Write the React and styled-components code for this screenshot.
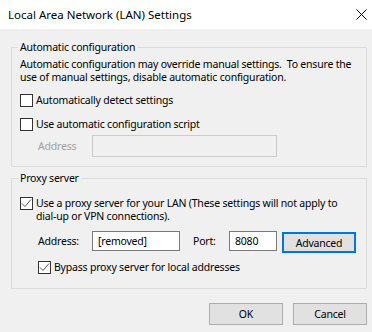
import React from 'react';
import styled, { createGlobalStyle } from 'styled-components';

const GlobalStyle = createGlobalStyle`
  html, body {
    margin: 0;
    padding: 0;
    background: #f0f0f0;
  }
  body {
    font-family: "Noto Sans", "Liberation Sans", sans-serif;
    font-size: 10.5px;
    letter-spacing: -0.2px;
    color: #000;
  }
`;

const Window = styled.div`
  width: 372px;
  height: 332px;
  display: flex;
  flex-direction: column;
  background: #f0f0f0;
  overflow: hidden;
`;

const TitleBar = styled.div`
  height: 29px;
  flex: none;
  box-sizing: border-box;
  background: #fff;
  display: flex;
  align-items: center;
  justify-content: space-between;
  padding: 0 5px 0 8px;
  font-size: 11.5px;
  letter-spacing: 0;
`;

const Body = styled.div`
  display: flex;
  flex-direction: column;
  padding: 11px 5px 0 11px;
`;

const Group = styled.fieldset`
  margin: 0 0 ${(p) => p.$gap || 0}px;
  padding: 0 8px;
  border: 1px solid #dcdcdc;
  height: ${(p) => p.$height}px;
  box-sizing: border-box;
  min-width: 0;
`;

const Legend = styled.legend`
  padding: 0 2px;
  margin-left: -2px;
  line-height: 14px;
`;

const Text = styled.p`
  margin: ${(p) => p.$top || 0}px 0 0 0;
  line-height: 13px;
  white-space: nowrap;
`;

const CheckRow = styled.label`
  display: flex;
  align-items: flex-start;
  gap: 3px;
  margin: ${(p) => p.$top || 0}px 0 0 ${(p) => p.$indent || 0}px;
  line-height: 12.5px;
  white-space: nowrap;
`;

const Box = styled.span`
  width: 13px;
  height: 13px;
  flex: none;
  box-sizing: border-box;
  border: 1px solid #333;
  background: #fff;
  display: flex;
  align-items: center;
  justify-content: center;
`;

const FieldRow = styled.div`
  display: flex;
  align-items: flex-start;
  margin: ${(p) => p.$top || 0}px 0 0 18px;
`;

const FieldLabel = styled.span`
  width: ${(p) => p.$w}px;
  height: ${(p) => p.$h || 20}px;
  flex: none;
  display: flex;
  align-items: center;
  margin-left: ${(p) => p.$ml || 0}px;
  color: ${(p) => (p.$disabled ? '#a0a0a0' : '#000')};
`;

const Input = styled.div`
  width: ${(p) => p.$w}px;
  height: ${(p) => p.$h || 20}px;
  box-sizing: border-box;
  flex: none;
  border: 1px solid ${(p) => (p.$disabled ? '#cccccc' : '#7a7a7a')};
  background: ${(p) => (p.$disabled ? '#f0f0f0' : '#fff')};
  display: flex;
  align-items: center;
  padding-left: 5px;
`;

const Button = styled.div`
  width: ${(p) => p.$w}px;
  height: ${(p) => p.$h || 22}px;
  box-sizing: border-box;
  flex: none;
  background: #e1e1e1;
  border: ${(p) => (p.$focus ? '2px solid #0078d7' : '1px solid #adadad')};
  display: flex;
  align-items: center;
  justify-content: center;
  margin: ${(p) => p.$mt || 0}px 0 0 ${(p) => p.$ml || 0}px;
`;

const Footer = styled.div`
  display: flex;
  justify-content: flex-end;
  gap: 10px;
  margin-top: 14px;
`;

const Check = () => (
  <svg width="11" height="11" viewBox="0 0 11 11">
    <path d="M1 5.5 L4 8.5 L10 1.5" fill="none" stroke="#555" strokeWidth="1" />
  </svg>
);

const Close = () => (
  <svg width="11" height="11" viewBox="0 0 11 11">
    <path d="M0.5 0.5 L10.5 10.5 M10.5 0.5 L0.5 10.5" stroke="#000" strokeWidth="1" />
  </svg>
);

const CheckBox = ({ checked, top, indent, children }) => (
  <CheckRow $top={top} $indent={indent}>
    <Box>{checked && <Check />}</Box>
    <span>{children}</span>
  </CheckRow>
);

export default function App() {
  return (
    <Window>
      <GlobalStyle />
      <TitleBar>
        <span>Local Area Network (LAN) Settings</span>
        <Close />
      </TitleBar>
      <Body>
        <Group $height={127} $gap={4}>
          <Legend>Automatic configuration</Legend>
          <Text $top={4}>
            Automatic configuration may override manual settings.&nbsp; To ensure the
            <br />
            use of manual settings, disable automatic configuration.
          </Text>
          <CheckBox top={10}>Automatically detect settings</CheckBox>
          <CheckBox top={11}>Use automatic configuration script</CheckBox>
          <FieldRow $top={4}>
            <FieldLabel $w={54} $h={22} $disabled>Address</FieldLabel>
            <Input $w={185} $h={22} $disabled />
          </FieldRow>
        </Group>
        <Group $height={118}>
          <Legend>Proxy server</Legend>
          <CheckBox checked top={12}>
            Use a proxy server for your LAN (These settings will not apply to
            <br />
            dial-up or VPN connections).
          </CheckBox>
          <FieldRow $top={9}>
            <FieldLabel $w={54}>Address:</FieldLabel>
            <Input $w={88}>[removed]</Input>
            <FieldLabel $w={36} $ml={13}>Port:</FieldLabel>
            <Input $w={48}>8080</Input>
            <Button $w={74} $h={21} $focus $ml={5} $mt={1}>Advanced</Button>
          </FieldRow>
          <CheckBox checked top={8} indent={18}>Bypass proxy server for local addresses</CheckBox>
        </Group>
        <Footer>
          <Button $w={74}>OK</Button>
          <Button $w={74}>Cancel</Button>
        </Footer>
      </Body>
    </Window>
  );
}
